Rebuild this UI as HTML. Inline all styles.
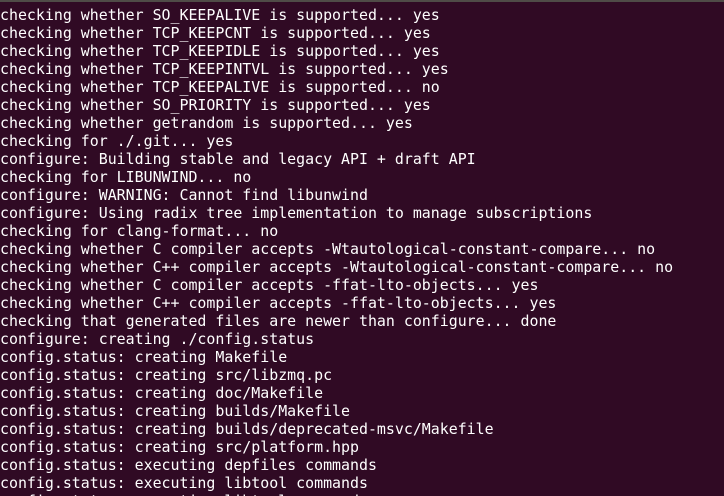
<!DOCTYPE html>
<html><head><style>
html,body{margin:0;padding:0;width:724px;height:496px;overflow:hidden;background:#300a24;}
.bar{height:2px;background:#4f4b47;}
pre{margin:0;padding:4px 0 0 0;font-family:"DejaVu Sans Mono","Liberation Mono",monospace;font-size:14.92px;line-height:18px;color:#ffffff;}
</style></head><body><div class="bar"></div><pre>checking whether SO_KEEPALIVE is supported... yes
checking whether TCP_KEEPCNT is supported... yes
checking whether TCP_KEEPIDLE is supported... yes
checking whether TCP_KEEPINTVL is supported... yes
checking whether TCP_KEEPALIVE is supported... no
checking whether SO_PRIORITY is supported... yes
checking whether getrandom is supported... yes
checking for ./.git... yes
configure: Building stable and legacy API + draft API
checking for LIBUNWIND... no
configure: WARNING: Cannot find libunwind
configure: Using radix tree implementation to manage subscriptions
checking for clang-format... no
checking whether C compiler accepts -Wtautological-constant-compare... no
checking whether C++ compiler accepts -Wtautological-constant-compare... no
checking whether C compiler accepts -ffat-lto-objects... yes
checking whether C++ compiler accepts -ffat-lto-objects... yes
checking that generated files are newer than configure... done
configure: creating ./config.status
config.status: creating Makefile
config.status: creating src/libzmq.pc
config.status: creating doc/Makefile
config.status: creating builds/Makefile
config.status: creating builds/deprecated-msvc/Makefile
config.status: creating src/platform.hpp
config.status: executing depfiles commands
config.status: executing libtool commands
config.status: executing libtool commands</pre></body></html>
